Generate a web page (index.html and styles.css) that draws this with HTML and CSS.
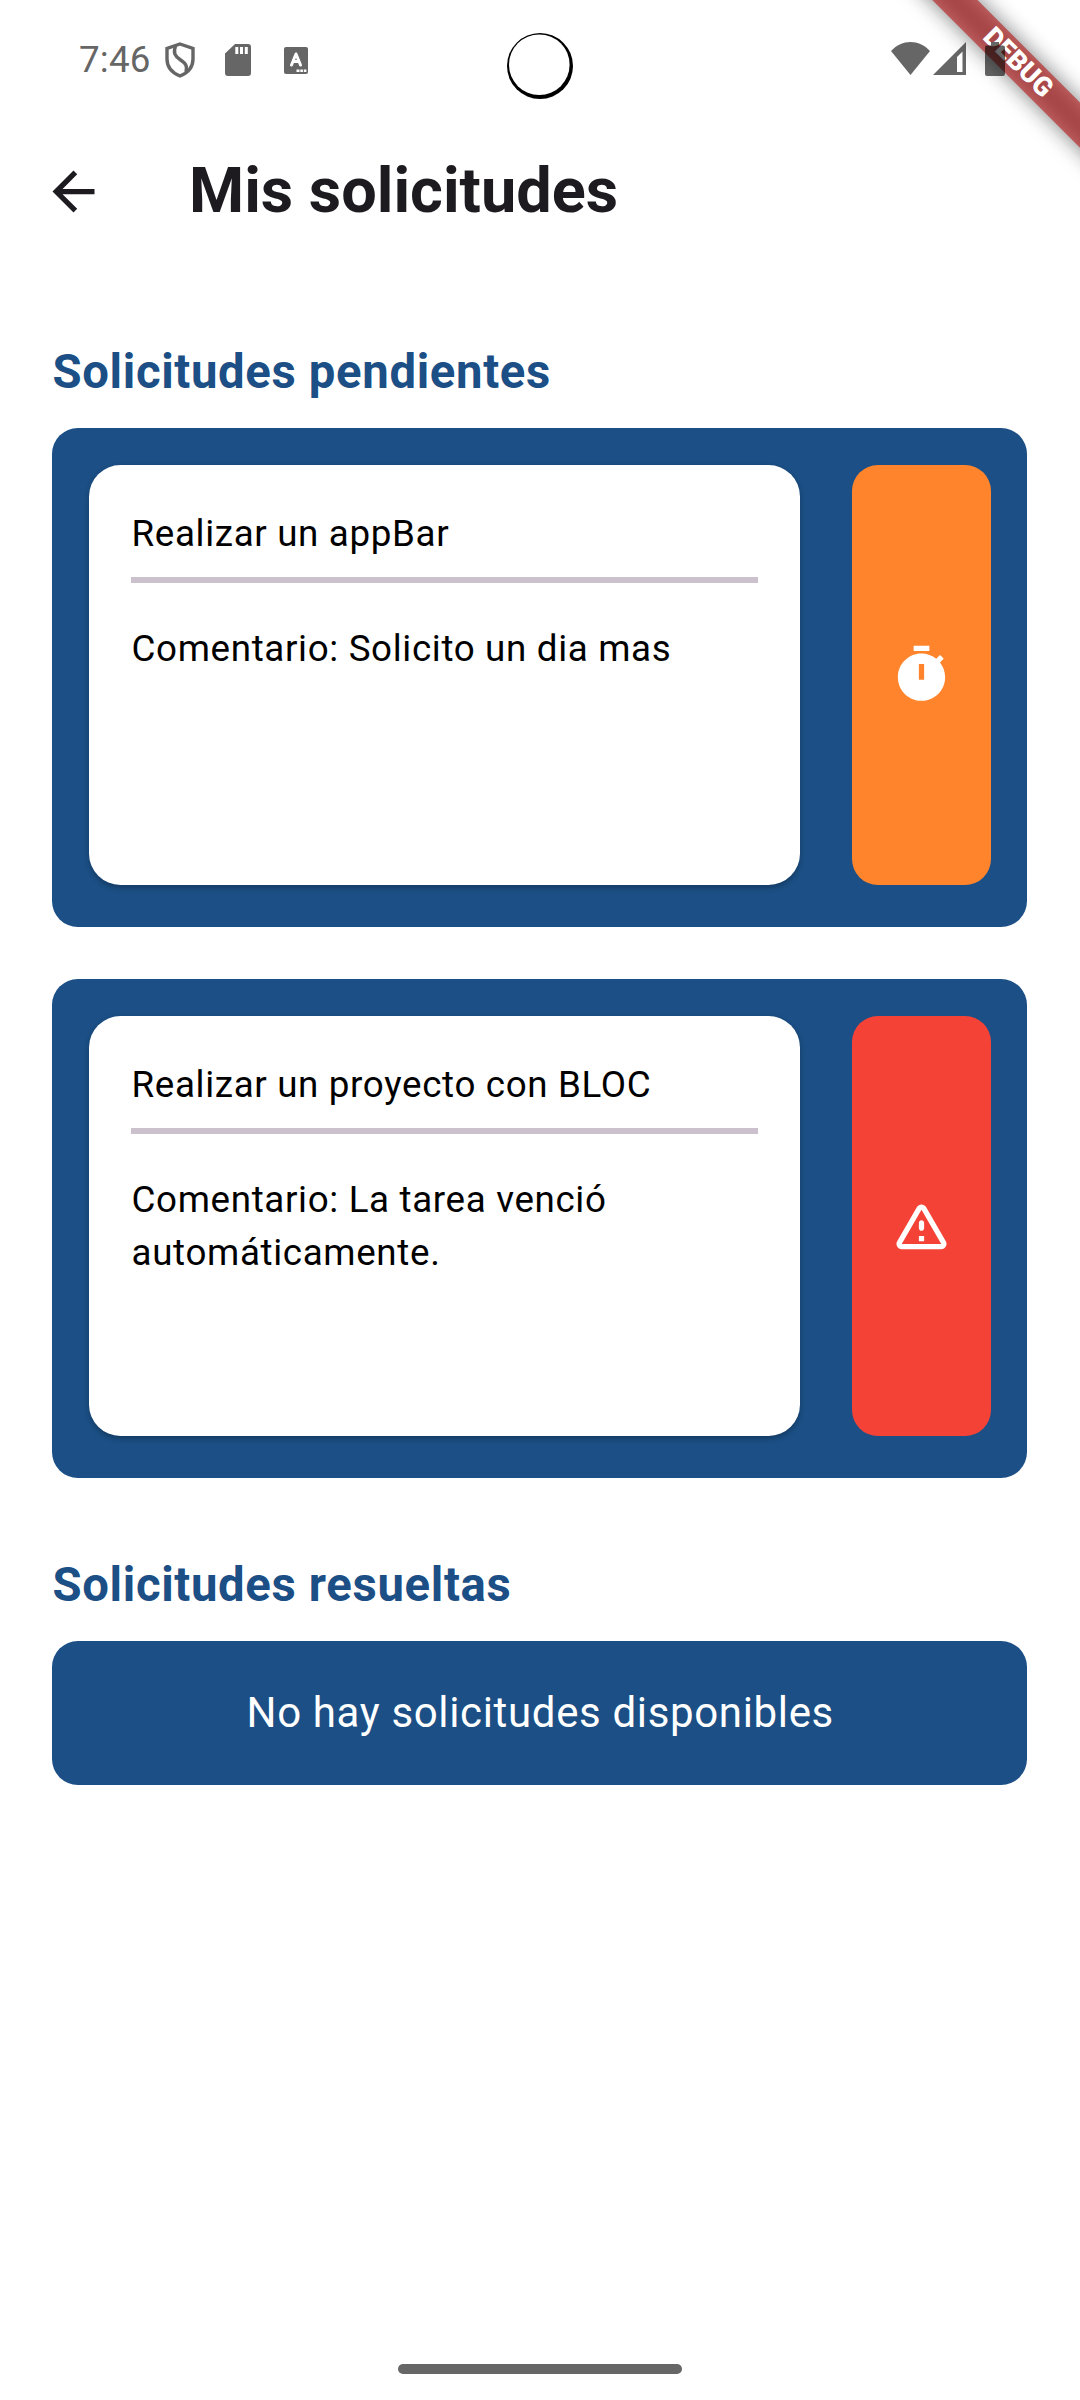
FILE: index.html
```html
<!DOCTYPE html>
<html lang="es">
<head>
<meta charset="utf-8">
<title>Mis solicitudes</title>
<link rel="stylesheet" href="styles.css">
</head>
<body>
<div class="screen">
  <header class="status-bar">
    <div class="status-left">
      <span class="clock">7:46</span>
      <svg class="status-icon" width="30" height="36" viewBox="0 0 30 36">
        <path d="M15 2 28 6.500V17C28 25 22.500 31 15 34 7.500 31 2 25 2 17V6.500Z" fill="none" stroke="#666" stroke-width="3.400"/>
        <path d="M10.500 4C8 11 10 14 15 17.500C21 21.500 22.500 24 21 30" fill="none" stroke="#666" stroke-width="3.400"/>
      </svg>
      <svg class="status-icon sd" width="26" height="32" viewBox="0 0 26 32">
        <path fill="#666" fill-rule="evenodd" d="M10 0H23a3 3 0 0 1 3 3V29a3 3 0 0 1-3 3H3a3 3 0 0 1-3-3V9.500ZM10.300 3v7h3V3zm4.700 0v7h3V3zm4.800 0v7h3V3z"/>
      </svg>
      <svg class="status-icon keyboard" width="24" height="27" viewBox="0 0 24 27">
        <rect width="24" height="27" rx="2" fill="#666"/>
        <path d="M7.500 18 12 7 16.500 18M9.500 14.500H14.500" fill="none" stroke="#fff" stroke-width="3" stroke-linecap="round" stroke-linejoin="round"/>
        <path d="M12.500 22.500h3v2.500h-3zm3.800 0h2.600v2.500h-2.600zm3.500 0h2.600v2.500h-2.600z" fill="#fff"/>
      </svg>
    </div>
    <div class="status-right">
      <svg width="39" height="33" viewBox="0 0 39 33"><path fill="#666" d="M19.500 33 0 9C11-3 28-3 39 9Z"/></svg>
      <svg width="33" height="33" viewBox="0 0 33 33"><path fill="#666" fill-rule="evenodd" d="M33 0V33H0ZM29.500 9.500 24 15V30h5.500Z"/></svg>
      <svg class="battery" width="20" height="34" viewBox="0 0 20 34"><path fill="#000" fill-opacity=".6" d="M6 0h8v3.500h4a2 2 0 0 1 2 2V32a2 2 0 0 1-2 2H2a2 2 0 0 1-2-2V5.500a2 2 0 0 1 2-2h4z"/></svg>
    </div>
    <svg class="camera" width="66" height="66" viewBox="0 0 66 66">
      <circle cx="33" cy="33" r="33"/><circle cx="32.300" cy="31.700" r="30.300" fill="#fff"/>
    </svg>
  </header>

  <div class="debug-banner">
    <div class="banner-shadow"></div>
    <div class="banner-strip">DEBUG</div>
  </div>

  <nav class="app-bar">
    <svg class="back" width="63" height="63" viewBox="0 0 24 24"><path fill="#1d1b20" d="M20 11H7.830l5.590-5.590L12 4l-8 8 8 8 1.410-1.410L7.830 13H20v-2z"/></svg>
    <h1>Mis solicitudes</h1>
  </nav>

  <main class="content">
    <h2>Solicitudes pendientes</h2>
    <article class="request">
      <div class="request-body">
        <p>Realizar un appBar</p>
        <hr>
        <p>Comentario: Solicito un dia mas</p>
      </div>
      <div class="request-state waiting">
        <svg width="63" height="63" viewBox="0 0 24 24"><path fill="#fff" d="M9 1h6v2H9zM19.030 7.390l1.420-1.420c-.43-.51-.9-.99-1.410-1.410l-1.420 1.420C16.070 4.740 14.120 4 12 4c-4.970 0-9 4.030-9 9s4.020 9 9 9 9-4.030 9-9c0-2.120-.74-4.070-1.970-5.610zM13 14h-2V8h2v6z"/></svg>
      </div>
    </article>
    <article class="request">
      <div class="request-body">
        <p>Realizar un proyecto con BLOC</p>
        <hr>
        <p>Comentario: La tarea venció automáticamente.</p>
      </div>
      <div class="request-state expired">
        <svg width="63" height="63" viewBox="0 0 24 24"><path fill="#fff" d="M12 5.990L19.530 19H4.470L12 5.990M2.740 18c-.77 1.330.19 3 1.730 3h15.060c1.540 0 2.500-1.670 1.730-3L13.730 4.990c-.77-1.330-2.690-1.330-3.460 0L2.740 18zM11 11v2c0 .55.45 1 1 1s1-.45 1-1v-2c0-.55-.45-1-1-1s-1 .45-1 1zm0 5h2v2h-2z"/></svg>
      </div>
    </article>
    <h2>Solicitudes resueltas</h2>
    <div class="empty">No hay solicitudes disponibles</div>
  </main>

  <footer class="gesture-area"><div class="gesture-bar"></div></footer>
</div>
</body>
</html>
```
FILE: styles.css
```css
* { box-sizing: border-box; }
body { margin: 0; background: #fff; font-family: Roboto, sans-serif; }
h1, h2, p { margin: 0; }
svg { display: block; flex: none; }

.screen {
  position: relative;
  display: flex;
  flex-direction: column;
  width: 1080px;
  height: 2400px;
  overflow: hidden;
}

.status-bar {
  position: relative;
  display: flex;
  justify-content: space-between;
  height: 118px;
  padding: 0 75px 0 79px;
}
.status-left, .status-right { display: flex; align-items: center; height: 120px; }
.status-right { align-items: flex-start; padding-top: 42px; }
.clock {
  width: 86px;
  margin-top: -1px;
  font-size: 36.75px;
  line-height: 50px;
  letter-spacing: .2px;
  color: #666;
}
.sd { margin-left: 30px; }
.keyboard { margin-left: 33px; }
.status-right svg + svg { margin-left: 3px; }
.status-right .battery { margin-left: 19px; position: relative; z-index: 3; }
.camera { position: absolute; left: 507px; top: 33px; }

/* Corner ribbon, laid over the top right of the app */
.debug-banner {
  position: absolute;
  left: 817.5px;
  top: 47px;
  width: 400px;
  height: 31.5px;
  transform: rotate(45deg);
  z-index: 2;
}
.banner-shadow { position: absolute; inset: 0; background: rgba(0, 0, 0, .5); filter: blur(10.4px); }
.banner-strip {
  position: absolute;
  inset: 0;
  background: rgba(183, 28, 28, .627);
  color: #fff;
  font-size: 26.8px;
  font-weight: 900;
  line-height: 31.5px;
  text-align: center;
}

.app-bar { display: flex; align-items: center; height: 147px; padding-left: 42px; }
.app-bar h1 {
  margin: -2px 0 0 84px;
  font-size: 63px;
  font-weight: 700;
  line-height: 80px;
  color: #1d1b20;
}

.content { display: flex; flex-direction: column; padding: 76px 53px 0 52px; }
.content h2 {
  height: 87px;
  padding-left: .5px;
  font-size: 47.25px;
  font-weight: 700;
  line-height: 63px;
  letter-spacing: .656px;
  color: #1b4f85;
}
.request {
  display: flex;
  gap: 52px;
  height: 499px;
  margin-bottom: 52px;
  padding: 37px 36px 42px 37px;
  border-radius: 26px;
  background: #1b4f85;
}
.request-body {
  flex: 1;
  padding: 43px 42px 41px 42.5px;
  border-radius: 31.5px;
  background: #fff;
  box-shadow: 0 2.6px 5px rgba(0, 0, 0, .25);
}
.request-body p {
  font-size: 36.75px;
  line-height: 52.5px;
  letter-spacing: .656px;
  color: #000;
}
.request-body hr {
  height: 5.5px;
  margin: 16.5px 0 40.5px -.5px;
  border: 0;
  background: #cac1cd;
}
.request-state {
  display: flex;
  align-items: center;
  justify-content: center;
  width: 139px;
  padding-bottom: 2px;
  border-radius: 26px;
}
.waiting { background: #ff842b; }
.expired { background: #f44336; }
.request + h2 { margin-top: 24px; }
.empty {
  height: 144px;
  padding-left: 1.5px;
  border-radius: 26px;
  background: #1b4f85;
  color: #fff;
  font-size: 42px;
  line-height: 144px;
  letter-spacing: .656px;
  text-align: center;
}

.gesture-area { display: flex; justify-content: center; margin-top: auto; height: 36px; }
.gesture-bar { width: 284px; height: 10px; border-radius: 5px; background: #666; }
```
